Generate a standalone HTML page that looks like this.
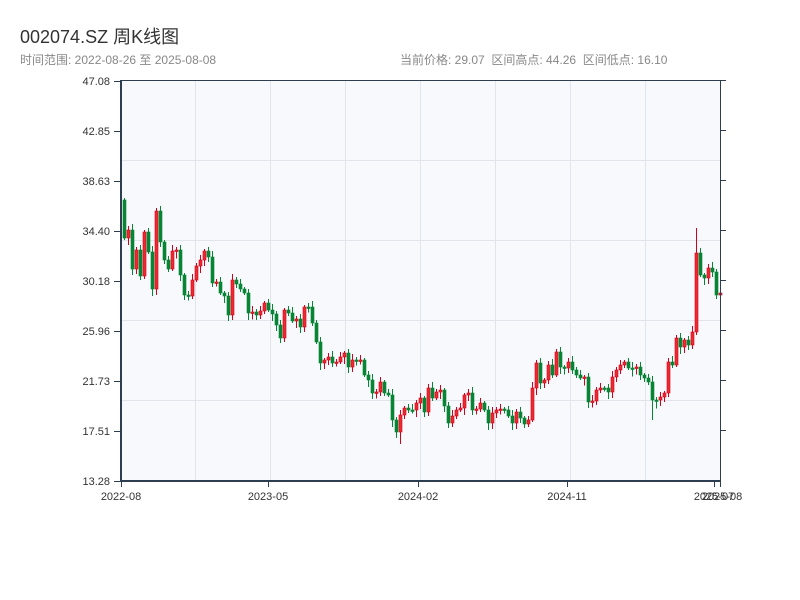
<!DOCTYPE html>
<html><head><meta charset="utf-8"><style>
html,body{margin:0;padding:0;background:#fff;}
body{width:800px;height:600px;position:relative;overflow:hidden;font-family:"Liberation Sans","Noto Sans CJK SC",sans-serif;}
.t{position:absolute;left:20px;top:23px;font-size:18px;color:#333;}
.s{position:absolute;top:51px;font-size:12px;color:#888;}
svg{position:absolute;left:0;top:0;}
</style></head><body>
<div class="t">002074.SZ 周K线图</div>
<div class="s" style="left:20px">时间范围: 2022-08-26 至 2025-08-08</div>
<div class="s" style="left:400px">当前价格: 29.07 &nbsp;区间高点: 44.26 &nbsp;区间低点: 16.10</div>
<svg id="c" width="800" height="600" xmlns="http://www.w3.org/2000/svg" font-family="Liberation Sans, sans-serif" font-size="11" fill="#333">
<rect x="121" y="80" width="599" height="401" fill="#f7f9fc"/>
<g stroke="#e1e4ea" stroke-width="1">
<line x1="195.5" y1="80" x2="195.5" y2="481"/><line x1="270.5" y1="80" x2="270.5" y2="481"/>
<line x1="345.5" y1="80" x2="345.5" y2="481"/><line x1="420.5" y1="80" x2="420.5" y2="481"/>
<line x1="495.5" y1="80" x2="495.5" y2="481"/><line x1="570.5" y1="80" x2="570.5" y2="481"/>
<line x1="645.5" y1="80" x2="645.5" y2="481"/>
<line x1="121" y1="160.5" x2="720" y2="160.5"/><line x1="121" y1="240.5" x2="720" y2="240.5"/>
<line x1="121" y1="320.5" x2="720" y2="320.5"/><line x1="121" y1="400.5" x2="720" y2="400.5"/>
</g>
<g id="k"></g>
<g stroke="#2c3e50">
<line x1="121" y1="80.5" x2="726" y2="80.5" stroke-width="1"/>
<line x1="720.5" y1="80" x2="720.5" y2="481" stroke-width="1"/>
<line x1="121" y1="80" x2="121" y2="482" stroke-width="2"/>
<line x1="120" y1="481" x2="721" y2="481" stroke-width="2"/>
<g stroke-width="1">
<line x1="114" y1="81.5" x2="121" y2="81.5"/><line x1="114" y1="131.5" x2="121" y2="131.5"/>
<line x1="114" y1="181.5" x2="121" y2="181.5"/><line x1="114" y1="231.5" x2="121" y2="231.5"/>
<line x1="114" y1="281.5" x2="121" y2="281.5"/><line x1="114" y1="331.5" x2="121" y2="331.5"/>
<line x1="114" y1="381.5" x2="121" y2="381.5"/><line x1="114" y1="431.5" x2="121" y2="431.5"/>
<line x1="114" y1="481.5" x2="121" y2="481.5"/>
<line x1="720" y1="130.5" x2="726" y2="130.5"/><line x1="720" y1="180.5" x2="726" y2="180.5"/>
<line x1="720" y1="230.5" x2="726" y2="230.5"/><line x1="720" y1="280.5" x2="726" y2="280.5"/>
<line x1="720" y1="330.5" x2="726" y2="330.5"/><line x1="720" y1="380.5" x2="726" y2="380.5"/>
<line x1="720" y1="430.5" x2="726" y2="430.5"/>
<line x1="121.5" y1="481" x2="121.5" y2="487"/><line x1="268.5" y1="481" x2="268.5" y2="487"/>
<line x1="418.5" y1="481" x2="418.5" y2="487"/><line x1="567.5" y1="481" x2="567.5" y2="487"/>
<line x1="714.5" y1="481" x2="714.5" y2="487"/><line x1="720.5" y1="481" x2="720.5" y2="487"/>
</g></g>
<g text-anchor="end">
<text x="110" y="85">47.08</text><text x="110" y="135">42.85</text><text x="110" y="185">38.63</text>
<text x="110" y="235">34.40</text><text x="110" y="285">30.18</text><text x="110" y="335">25.96</text>
<text x="110" y="385">21.73</text><text x="110" y="435">17.51</text><text x="110" y="485">13.28</text>
</g>
<g text-anchor="middle">
<text x="121" y="500">2022-08</text><text x="268" y="500">2023-05</text><text x="418" y="500">2024-02</text>
<text x="567" y="500">2024-11</text><text x="714" y="500">2025-07</text><text x="722" y="500">2025-08</text>
</g>
</svg>
<script>
var c=[238,230,269,250,276,232,252,289,211,242,260,269,251,250,275,295,296,280,266,260,251,257,283,282,293,296,315,280,284,289,293,313,312,315,311,303,310,314,325,338,310,313,321,319,327,307,307,323,342,363,360,357,363,362,357,353,367,360,361,360,375,380,393,392,382,393,395,420,432,415,408,410,410,403,
398,412,388,398,392,390,406,423,416,410,408,395,393,410,409,403,410,423,413,410,409,410,416,423,412,418,424,420,388,363,383,380,365,375,352,367,368,362,370,375,378,377,402,401,390,388,388,392,377,370,365,362,368,368,367,375,378,382,
400,400,397,393,362,365,338,347,340,345,332,253,275,278,268,272,295,293];
var g=document.getElementById('k'),h='';var o=200;
h+='<rect x="120" y="150" width="2" height="35" fill="#068535"/>';
for(var i=0;i<c.length;i++){var x=124+i*4,cl=c[i];var t=Math.min(o,cl),b=Math.max(o,cl);if(b-t<1.5){b=t+1.5;}
var up=cl<o;var col=up?'#d0021b':'#068535';var w1=2+(i*7%5),w2=2+(i*11%6);
if(i==143)w1=25;if(i==132)w2=20;if(i==69)w2=12;
h+='<line x1="'+(x+0.5)+'" x2="'+(x+0.5)+'" y1="'+(t-w1)+'" y2="'+(b+w2)+'" stroke="'+col+'" stroke-width="1"/>';
h+='<rect x="'+(x-1)+'" y="'+t+'" width="3" height="'+(b-t)+'" fill="'+(up?'#ee2a30':col)+'" stroke="'+col+'" stroke-width="0.6"/>';
o=cl;}
g.innerHTML=h;
</script>
</body></html>
